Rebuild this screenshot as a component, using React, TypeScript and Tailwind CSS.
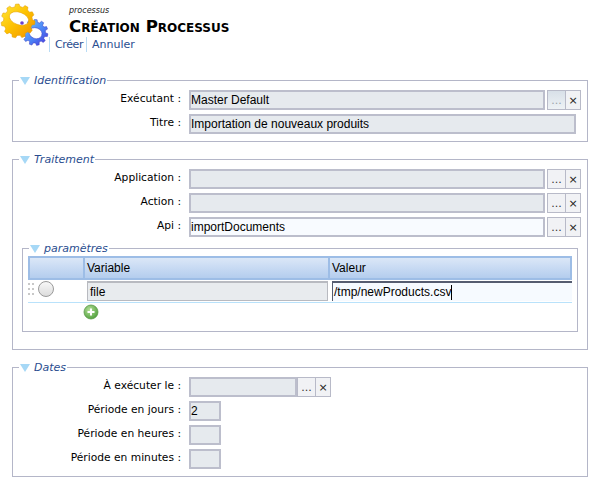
import type { ReactNode } from 'react'

const labelFont = "font-['DejaVu_Sans',sans-serif]"
const inputFont = "font-['Liberation_Sans',sans-serif]"

// builds the toothed outline for the header logo
function gearPath(cx: number, cy: number, outer: number, inner: number, teeth: number, rot = 0) {
  const pts: string[] = []
  const step = (Math.PI * 2) / teeth
  for (let i = 0; i < teeth; i++) {
    const a = rot + i * step
    const offsets: [number, number][] = [
      [-0.32, inner],
      [-0.18, outer],
      [0.18, outer],
      [0.32, inner],
    ]
    for (const [o, r] of offsets) {
      const t = a + o * step
      pts.push(`${(cx + Math.cos(t) * r).toFixed(1)},${(cy + Math.sin(t) * r).toFixed(1)}`)
    }
  }
  return `M${pts.join('L')}Z`
}

function GearsLogo() {
  return (
    <svg width="49" height="46" viewBox="0 0 49 46" className="block">
      <defs>
        <linearGradient id="gold" x1="0" y1="0" x2="1" y2="1">
          <stop offset="0" stopColor="#ffe83a" />
          <stop offset="0.5" stopColor="#fdc000" />
          <stop offset="1" stopColor="#f09000" />
        </linearGradient>
        <linearGradient id="blue" x1="0" y1="0" x2="1" y2="1">
          <stop offset="0" stopColor="#6fd0ff" />
          <stop offset="0.6" stopColor="#4a80f4" />
          <stop offset="1" stopColor="#4a2fd8" />
        </linearGradient>
      </defs>
      <path
        fillRule="evenodd"
        fill="url(#blue)"
        stroke="#3a3ac0"
        strokeWidth="0.5"
        d={`${gearPath(35, 32.5, 13, 10.5, 11, 0.2)}M29.5 31a6.5 5 20 1 0 12.2 4.4a6.5 5 20 1 0 -12.2 -4.4Z`}
      />
      <path
        fillRule="evenodd"
        fill="url(#gold)"
        stroke="#e09a00"
        strokeWidth="0.5"
        d={`${gearPath(18, 21, 17, 14.5, 11, 0.1)}M9.6 15.1a10 6 20 1 0 18.8 6.8a10 6 20 1 0 -18.8 -6.8Z`}
      />
      <circle cx="22" cy="23" r="1.8" fill="#6a3fd0" />
    </svg>
  )
}

function Legend({ title }: { title: string }) {
  return (
    <legend className="ml-[6px] flex h-[15px] items-center">
      <svg width="10" height="8" viewBox="0 0 10 8" className="mr-[4px] ml-[1px]">
        <path d="M0 0H10L5 8Z" fill="#a6d8f6" />
      </svg>
      <span className={`pr-px text-[11px] italic leading-[15px] text-[#2a4d8f] ${labelFont}`}>{title}</span>
    </legend>
  )
}

function Section({ title, children, className }: { title: string; children: ReactNode; className: string }) {
  return (
    <fieldset className={`border border-[#b4b6c8] ${className}`}>
      <Legend title={title} />
      {children}
    </fieldset>
  )
}

function Field({ value = '', light = false, className = '' }: { value?: string; light?: boolean; className?: string }) {
  return (
    <div
      className={`flex h-5 items-center overflow-hidden border-2 border-[#bcbecc] text-[12px] text-black ${inputFont} ${
        light ? 'bg-[#f8fbff]' : 'bg-[#e6eaee]'
      } ${className}`}
    >
      {value}
    </div>
  )
}

function PickerButtons({ active = false }: { active?: boolean }) {
  return (
    <div className="flex h-5 border border-[#b8bac8] bg-[#f1f2f5] text-black">
      <div
        className={`flex w-[18px] items-center justify-center border-r border-[#b8bac8] text-[11px] leading-none ${labelFont} ${
          active ? 'bg-gradient-to-b from-[#d8e0e8] to-[#eef2f5] text-[#9aa2aa]' : 'text-[#333]'
        }`}
      >
        ...
      </div>
      <div className={`flex w-[14px] items-center justify-center text-[11px] leading-none text-[#222] ${labelFont}`}>×</div>
    </div>
  )
}

function Row({ label, children }: { label: string; children: ReactNode }) {
  return (
    <div className="flex">
      <div className={`w-[176px] shrink-0 pr-[8px] text-right text-[10.7px] leading-[17px] text-black ${labelFont}`}>{label}</div>
      {children}
    </div>
  )
}

function PickerRow({ label, value, active, light }: { label: string; value?: string; active?: boolean; light?: boolean }) {
  return (
    <Row label={label}>
      <Field value={value} light={light} className="mr-0.5 w-[356px]" />
      <PickerButtons active={active} />
    </Row>
  )
}

function ParamsTable() {
  const headCell = 'flex h-full items-center border-2 border-[#9dbde6] bg-gradient-to-b from-[#dbe7f7] to-[#b4cdee] text-[12px] text-black pl-[2px]'
  return (
    <div className="mx-[5px]">
      <div className={`flex h-6 ${inputFont}`}>
        <div className={`${headCell} w-[55px] border-r-0`} />
        <div className={`${headCell} w-[245px] border-r-0`}>Variable</div>
        <div className={`${headCell} flex-1`}>Valeur</div>
      </div>
      <div className="flex h-[23px] items-start border-b border-[#b9e2fb] pt-px">
        <div className="flex w-[59px] items-center">
          <div className="grid grid-cols-2 gap-x-[2px] gap-y-[3px]">
            {[0, 1, 2, 3, 4, 5].map((i) => (
              <span key={i} className="size-[2px] bg-[#c8c8c8]" />
            ))}
          </div>
          <span className="ml-[4px] size-4 rounded-full border border-[#9a9a9a] bg-gradient-to-b from-[#f8f8f8] to-[#dcdcdc]" />
        </div>
        <div className={`flex h-5 w-[241px] items-center border border-t-2 border-[#b8bac0] bg-[#e8ebee] pl-0.5 text-[12px] ${inputFont}`}>file</div>
        <div className={`ml-[4px] flex h-5 flex-1 items-center border-t-2 border-l border-[#555c70] bg-[#f6faff] pl-px text-[12px] ${inputFont}`}>
          /tmp/newProducts.csv
          <span className="h-[15px] w-px bg-black" />
        </div>
      </div>
      <svg width="16" height="16" viewBox="0 0 16 16" className="mt-px ml-[55px] block">
        <defs>
          <radialGradient id="plus" cx="0.4" cy="0.35" r="0.7">
            <stop offset="0" stopColor="#b6e09a" />
            <stop offset="1" stopColor="#4e9e3a" />
          </radialGradient>
        </defs>
        <circle cx="8" cy="8" r="7" fill="url(#plus)" stroke="#5a9a48" strokeWidth="0.8" />
        <path d="M8 4.5v7M4.5 8h7" stroke="#fff" strokeWidth="2" />
      </svg>
    </div>
  )
}

export default function App() {
  return (
    <div className="h-[489px] w-[600px] overflow-hidden bg-white">
      <header className="flex">
        <div className="w-[49px] shrink-0">
          <GearsLogo />
        </div>
        <div>
          <div className={`pt-[5px] pl-5 text-[8px] italic leading-[11px] text-[#222] ${labelFont}`}>processus</div>
          <h1 className={`pt-px pl-5 text-[16.6px] font-bold leading-5 text-black [font-variant:small-caps] ${labelFont}`}>Création Processus</h1>
          <nav className={`flex text-[11px] leading-[15px] text-[#2a4d8f] ${labelFont}`}>
            <a className="w-[37px] border-l border-[#b9dcf5] pl-[5px] tracking-[-0.4px]">Créer</a>
            <a className="border-l border-[#b9dcf5] pl-[5px]">Annuler</a>
          </nav>
        </div>
      </header>

      <main className="mt-[21px] flex flex-col gap-[10px] px-3">
        <Section title="Identification" className="h-[69px]">
          <div className="flex flex-col gap-1 pt-[2px]">
            <PickerRow label="Exécutant :" value="Master Default" active />
            <Row label="Titre :">
              <Field value="Importation de nouveaux produits" className="w-[387px]" />
            </Row>
          </div>
        </Section>

        <Section title="Traitement" className="h-[198px]">
          <div className="flex flex-col gap-1 pt-[2px]">
            <PickerRow label="Application :" />
            <PickerRow label="Action :" />
            <PickerRow label="Api :" value="importDocuments" light />
          </div>
          <fieldset className="mx-[9px] mt-[4px] h-[91px] border border-[#b4b6c8]">
            <Legend title="paramètres" />
            <ParamsTable />
          </fieldset>
        </Section>

        <Section title="Dates" className="h-[117px]">
          <div className="flex flex-col gap-1 pt-[2px]">
            <Row label="À exécuter le :">
              <Field className="w-[108px]" />
              <PickerButtons />
            </Row>
            <Row label="Période en jours :">
              <Field value="2" className="w-8" />
            </Row>
            <Row label="Période en heures :">
              <Field className="w-8" />
            </Row>
            <Row label="Période en minutes :">
              <Field className="w-8" />
            </Row>
          </div>
        </Section>
      </main>
    </div>
  )
}
